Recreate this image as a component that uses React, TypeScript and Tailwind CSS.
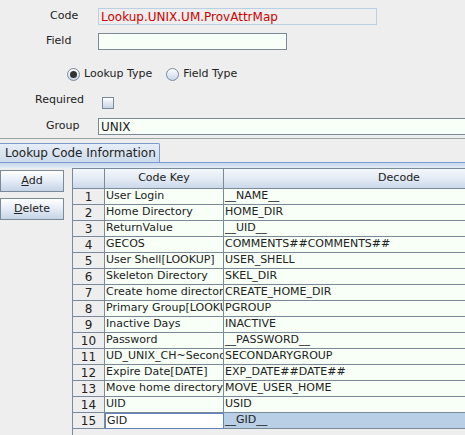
import React from "react";

const rows: [string, string][] = [
  ["User Login", "__NAME__"],
  ["Home Directory", "HOME_DIR"],
  ["ReturnValue", "__UID__"],
  ["GECOS", "COMMENTS##COMMENTS##"],
  ["User Shell[LOOKUP]", "USER_SHELL"],
  ["Skeleton Directory", "SKEL_DIR"],
  ["Create home directory", "CREATE_HOME_DIR"],
  ["Primary Group[LOOKUP]", "PGROUP"],
  ["Inactive Days", "INACTIVE"],
  ["Password", "__PASSWORD__"],
  ["UD_UNIX_CH~SecondaryGroup", "SECONDARYGROUP"],
  ["Expire Date[DATE]", "EXP_DATE##DATE##"],
  ["Move home directory", "MOVE_USER_HOME"],
  ["UID", "USID"],
  ["GID", "__GID__"],
];

function Radio({ checked, label }: { checked?: boolean; label: string }) {
  return (
    <div className="flex items-center gap-[4px]">
      <span className="w-[13px] h-[13px] rounded-full border border-[#7a8a99] bg-gradient-to-b from-white to-[#c6d6e8] flex items-center justify-center">
        {checked && <span className="w-[7px] h-[7px] rounded-full bg-[#333333]" />}
      </span>
      <span>{label}</span>
    </div>
  );
}

function SideButton({ label }: { label: string }) {
  return (
    <button className="w-[64px] h-[22px] border border-[#7a8a99] bg-gradient-to-b from-white via-[#e4ecf5] to-[#c4d3e6] text-center">
      <span className="underline">{label[0]}</span>
      {label.slice(1)}
    </button>
  );
}

export default function App() {
  return (
    <div
      className="w-[465px] h-[435px] overflow-hidden bg-[#eeeeee] text-[11px] text-[#222222]"
      style={{ fontFamily: '"DejaVu Sans", sans-serif' }}
    >
      {/* form */}
      <div className="flex items-center h-[17px] mt-[8px]">
        <span className="w-[98px] pl-[50px]">Code</span>
        <div className="w-[279px] h-[17px] border border-[#b8cfe5] pl-[2px] flex items-center text-[#cc0000] text-[12px]">
          Lookup.UNIX.UM.ProvAttrMap
        </div>
      </div>
      <div className="flex items-center h-[17px] mt-[8px]">
        <span className="w-[98px] pl-[46px]">Field</span>
        <div className="w-[189px] h-[17px] border border-[#7a8a99] bg-[#f7fff7]" />
      </div>
      <div className="flex items-center h-[16px] mt-[16px] pl-[67px] gap-[14px]">
        <Radio checked label="Lookup Type" />
        <Radio label="Field Type" />
      </div>
      <div className="flex items-center h-[16px] mt-[10px]">
        <span className="w-[102px] pl-[35px]">Required</span>
        <span className="w-[12px] h-[12px] mt-[6px] border border-[#7a8a99] bg-gradient-to-b from-white to-[#c4d4e6]" />
      </div>
      <div className="flex items-center h-[17px] mt-[10px]">
        <span className="w-[98px] pl-[46px]">Group</span>
        <div className="flex-1 h-[17px] border-y border-l border-[#7a8a99] bg-[#f7fff7] pl-[2px] flex items-center text-[12px]">
          UNIX
        </div>
      </div>
      <div className="h-px bg-[#9aa4a0] mt-[3px]" />

      {/* tab */}
      <div className="flex mt-[4px] h-[19px]">
        <div className="w-[160px] border-t border-r border-[#7a9bd0] bg-gradient-to-b from-[#e6eef7] to-[#cddbeb] rounded-tr-[2px] pl-[5px] flex items-center text-[12px]">
          Lookup Code Information
        </div>
      </div>
      <div className="h-px bg-[#7a9bd0]" />
      <div className="h-[5px] bg-gradient-to-b from-[#c8d8ec] to-[#e3ebf5]" />

      {/* content */}
      <div className="flex">
        <div className="w-[72px] flex flex-col gap-[6px] pt-[2px]">
          <SideButton label="Add" />
          <SideButton label="Delete" />
        </div>
        <div className="flex-1 h-[267px] border-l border-[#7a8a99] overflow-hidden">
          <div className="w-[520px]">
            <div className="flex h-[21px] border-t border-[#7a8a99] bg-gradient-to-b from-[#f4f8fc] via-[#e2eaf4] to-[#c9d7e8]">
              <div className="w-[32px] border-r border-b border-[#7a8a99]" />
              <div className="w-[119px] border-r border-b border-[#7a8a99] flex items-center justify-center">
                Code Key
              </div>
              <div className="w-[350px] border-b border-[#7a8a99] flex items-center justify-center">
                Decode
              </div>
            </div>
            {rows.map(([key, decode], i) => {
              const sel = i === rows.length - 1;
              return (
                <div key={i} className="flex h-[16px]">
                  <div className="w-[32px] border-r border-b border-[#7a8a99] bg-[#eeeeee] flex items-center justify-center text-[12px]">
                    {i + 1}
                  </div>
                  <div
                    className={
                      sel
                        ? "w-[119px] border border-[#6382bf] bg-white pl-[1px] flex items-center whitespace-nowrap overflow-hidden"
                        : "w-[119px] border-r border-b border-[#7a8a99] bg-[#f7fff7] pl-[1px] flex items-center whitespace-nowrap overflow-hidden"
                    }
                  >
                    {key}
                  </div>
                  <div
                    className={
                      sel
                        ? "w-[350px] border-b border-[#7a8a99] bg-[#b8cfe5] pl-[1px] flex items-center whitespace-nowrap"
                        : "w-[350px] border-b border-[#7a8a99] bg-[#f7fff7] pl-[1px] flex items-center whitespace-nowrap"
                    }
                  >
                    {decode}
                  </div>
                </div>
              );
            })}
          </div>
        </div>
      </div>
    </div>
  );
}
